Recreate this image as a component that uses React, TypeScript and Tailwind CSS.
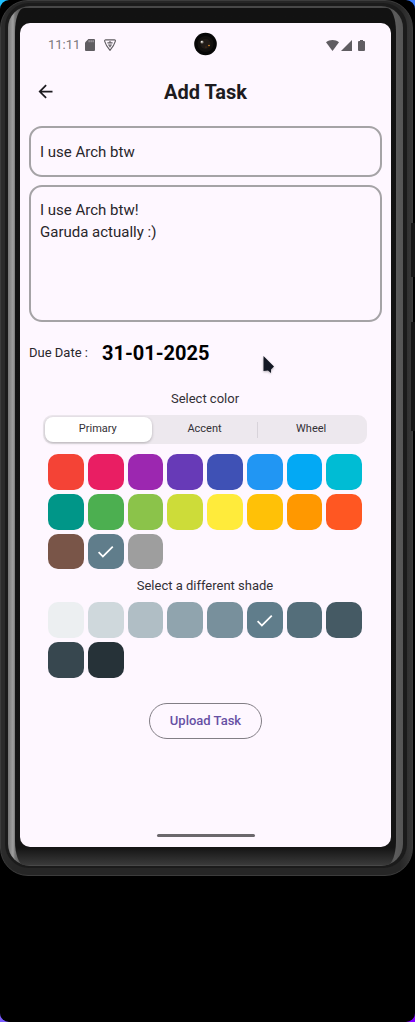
import { useState } from 'react';

type Swatch = { name: string; cls: string };

const primaryColors: Swatch[] = [
  { name: 'Red', cls: 'bg-[#f44336]' },
  { name: 'Pink', cls: 'bg-[#e91e63]' },
  { name: 'Purple', cls: 'bg-[#9c27b0]' },
  { name: 'Deep purple', cls: 'bg-[#673ab7]' },
  { name: 'Indigo', cls: 'bg-[#3f51b5]' },
  { name: 'Blue', cls: 'bg-[#2196f3]' },
  { name: 'Light blue', cls: 'bg-[#03a9f4]' },
  { name: 'Cyan', cls: 'bg-[#00bcd4]' },
  { name: 'Teal', cls: 'bg-[#009688]' },
  { name: 'Green', cls: 'bg-[#4caf50]' },
  { name: 'Light green', cls: 'bg-[#8bc34a]' },
  { name: 'Lime', cls: 'bg-[#cddc39]' },
  { name: 'Yellow', cls: 'bg-[#ffeb3b]' },
  { name: 'Amber', cls: 'bg-[#ffc107]' },
  { name: 'Orange', cls: 'bg-[#ff9800]' },
  { name: 'Deep orange', cls: 'bg-[#ff5722]' },
  { name: 'Brown', cls: 'bg-[#795548]' },
  { name: 'Blue grey', cls: 'bg-[#607d8b]' },
  { name: 'Grey', cls: 'bg-[#9e9e9e]' },
];

const shades: Swatch[] = [
  { name: 'Blue grey 50', cls: 'bg-[#eceff1]' },
  { name: 'Blue grey 100', cls: 'bg-[#cfd8dc]' },
  { name: 'Blue grey 200', cls: 'bg-[#b0bec5]' },
  { name: 'Blue grey 300', cls: 'bg-[#90a4ae]' },
  { name: 'Blue grey 400', cls: 'bg-[#78909c]' },
  { name: 'Blue grey 500', cls: 'bg-[#607d8b]' },
  { name: 'Blue grey 600', cls: 'bg-[#546e7a]' },
  { name: 'Blue grey 700', cls: 'bg-[#455a64]' },
  { name: 'Blue grey 800', cls: 'bg-[#37474f]' },
  { name: 'Blue grey 900', cls: 'bg-[#263238]' },
];

function SwatchGrid({ items, initial }: { items: Swatch[]; initial: string }) {
  const [selected, setSelected] = useState(initial);
  return (
    <div className="grid grid-cols-8 gap-1">
      {items.map((s) => (
        <button
          key={s.name}
          type="button"
          aria-label={s.name}
          aria-pressed={selected === s.name}
          onClick={() => setSelected(s.name)}
          className={`flex aspect-square items-center justify-center rounded-[10px] ${s.cls}`}
        >
          {selected === s.name && (
            <svg viewBox="0 0 24 24" className="size-[21px]" fill="#fff" aria-hidden="true">
              <path d="M9 16.17 4.83 12l-1.42 1.41L9 19 21 7l-1.41-1.41z" />
            </svg>
          )}
        </button>
      ))}
    </div>
  );
}

function StatusBar() {
  return (
    <div className="flex h-11 items-center justify-between pr-[26px] pl-7 text-[#7b777c]">
      <div className="flex items-center">
        <span className="text-[13px] leading-4">11:11</span>
        <svg viewBox="0 0 10 12" className="ml-[5px] h-3 w-[10px]" fill="#605d62" aria-hidden="true">
          <path d="M3.4 0H9a1 1 0 0 1 1 1v10a1 1 0 0 1-1 1H1a1 1 0 0 1-1-1V3.5z" />
          <path d="M3.6 1.2h1v2h-1zM5.6 1.2h1v2h-1zM7.6 1.2h1v2h-1z" fill="#b5afb7" />
        </svg>
        <svg viewBox="0 0 12 12" className="ml-[9px] size-3" fill="none" stroke="#605d62" aria-hidden="true">
          <path d="M1.500.9h9q1.200 0 .8 1.500C10.600 5 8 9 6 11.300 4 9 1.400 5 .7 2.400.3.900 1.500.900 1.500.900z" strokeWidth="1.100" strokeLinejoin="round" />
          <path d="M3.400 3.900h5.200M4.100 6h3.800" strokeWidth="1.200" />
          <path d="M6 2.300v1.400M6 6v2.200" strokeWidth="1.500" />
        </svg>
      </div>
      <div className="flex items-center text-[#605d62]">
        <svg viewBox="0 0 13 11" className="h-[11px] w-[13px]" fill="currentColor" aria-hidden="true">
          <path d="M0 2.300C3.600-.7 9.400-.7 13 2.300L6.500 11z" />
        </svg>
        <svg viewBox="0 0 11 11" className="ml-[2px] size-[11px]" fill="currentColor" aria-hidden="true">
          <path d="M11 0v11H0z" />
        </svg>
        <svg viewBox="0 0 7 11" className="ml-[6px] h-[11px] w-[7px]" fill="currentColor" aria-hidden="true">
          <path d="M2 0h3v1h1a1 1 0 0 1 1 1v8a1 1 0 0 1-1 1H1a1 1 0 0 1-1-1V2a1 1 0 0 1 1-1h1z" />
        </svg>
      </div>
    </div>
  );
}

function Camera() {
  return (
    <svg viewBox="0 0 24 24" className="absolute top-[9px] left-1/2 size-6 -translate-x-1/2" aria-hidden="true">
      <circle cx="11.500" cy="12" r="11.300" fill="#070707" />
      <circle cx="11.500" cy="12" r="8" fill="#13110f" />
      <circle cx="11.500" cy="12" r="5" fill="#211b17" />
      <circle cx="8" cy="10" r="1.600" fill="#8a857c" />
      <circle cx="7.800" cy="9.800" r=".8" fill="#fff" />
      <circle cx="15" cy="13.500" r=".8" fill="#e8932a" />
      <circle cx="12" cy="15" r=".6" fill="#7a4015" />
    </svg>
  );
}

function Cursor() {
  return (
    <svg
      viewBox="0 0 12 19"
      className="absolute top-[333px] left-[243px] h-[19px] w-3 drop-shadow-[0_1px_1px_rgba(0,0,0,0.3)]"
      aria-hidden="true"
    >
      <path d="M.5 0 11 10.500 8 13.500V17L5 14.500.5 15z" fill="#141824" />
    </svg>
  );
}

const tabs = ['Primary', 'Accent', 'Wheel'];

function TaskForm() {
  const [tab, setTab] = useState('Primary');
  return (
    <form className="flex flex-col px-[9px]" onSubmit={(e) => e.preventDefault()}>
      <input
        aria-label="Title"
        defaultValue="I use Arch btw"
        className="h-[51px] w-full rounded-[13px] border-2 border-[#a5a3a6] bg-transparent px-[9px] text-[15px] text-[#29262b] outline-none"
      />
      <textarea
        aria-label="Description"
        defaultValue={'I use Arch btw!\nGaruda actually :)'}
        className="mt-2 block h-[137px] w-full resize-none rounded-[13px] border-2 border-[#a5a3a6] bg-transparent px-[9px] py-3 text-[15px] leading-[22px] text-[#29262b] outline-none"
      />
      <div className="mt-[15px] flex h-8 items-center gap-[14px]">
        <span className="text-[13px] text-[#29262b]">Due Date :</span>
        <button type="button" className="text-xl font-bold text-black">
          31-01-2025
        </button>
      </div>
      <section className="mt-5 pr-[15px] pl-[14px]">
        <h2 className="text-center text-[13px] leading-5 text-[#333036]">Select color</h2>
        <div role="tablist" className="mt-[6px] grid h-[29px] grid-cols-3 rounded-[9px] bg-[#ede8ee] p-[2px]">
          {tabs.map((t) => (
            <button
              key={t}
              type="button"
              role="tab"
              aria-selected={tab === t}
              onClick={() => setTab(t)}
              className={`flex items-center rounded-lg text-[11px] text-[#333036] ${
                tab === t ? 'bg-white shadow-[0_1px_3px_rgba(0,0,0,0.25)]' : ''
              }`}
            >
              <span
                className={`flex h-4 flex-1 items-center justify-center border-r ${
                  t === 'Accent' ? 'border-[#d8d3da]' : 'border-transparent'
                }`}
              >
                {t}
              </span>
            </button>
          ))}
        </div>
        <div className="mt-[10px] px-[5px]">
          <SwatchGrid items={primaryColors} initial="Blue grey" />
          <h2 className="mt-[7px] mb-[6px] text-center text-[13px] leading-5 text-[#333036]">
            Select a different shade
          </h2>
          <SwatchGrid items={shades} initial="Blue grey 500" />
        </div>
      </section>
      <button
        type="submit"
        className="mt-[25px] h-9 self-center rounded-full border border-[#827e85] px-5 text-[13px] font-medium text-[#6750a4]"
      >
        Upload Task
      </button>
    </form>
  );
}

export default function App() {
  return (
    <div className="min-h-screen bg-[conic-gradient(from_0deg,#22a0ff,#3f7fff_6%,#8000ff_44%,#7a5cff_56%,#1fc0ff_94%,#22a0ff)] font-[Roboto,sans-serif]">
      <div className="min-h-screen rounded-[9px] bg-black pr-[2px]">
        <div className="relative rounded-[28px] border border-[#3c3c3c] bg-[linear-gradient(to_right,#2c2c2c,#262626_3%,#262626_97%,#383838)] pt-[2px] pr-[5px] pb-[7px] pl-1">
          <span className="absolute top-[222px] -right-[3px] h-[54px] w-1 bg-[#151515]" />
          <span className="absolute top-[321px] -right-[3px] h-[109px] w-1 bg-[#151515]" />
          <div className="rounded-[24px] bg-[#1b1b1b] pt-[3px] pr-[4px] pb-[2px] pl-[3px]">
            <div className="rounded-[22px] bg-[linear-gradient(to_right,#777,#a0a0a0_5px,#777_7px,#484848_14px,#484848_96%,#5c5c5c_98%,#555)] px-[7px] pt-[2px] pb-[1px]">
              <div className="rounded-[9px/24px] bg-[linear-gradient(to_bottom,#121212,#151515_98%,#3a3a3a)] px-[5px] pt-[15px] pb-[18px]">
                <main className="relative flex h-[824px] flex-col rounded-[10px] bg-[#fef7ff]">
                  <StatusBar />
                  <Camera />
                  <header className="grid h-[59px] grid-cols-[48px_1fr_48px] items-center pb-[10px]">
                    <button type="button" aria-label="Back" className="flex justify-center pl-[2px]">
                      <svg viewBox="0 0 24 24" className="size-[21px]" fill="#1d1b20" aria-hidden="true">
                        <path d="M20 11H7.830l5.590-5.590L12 4l-8 8 8 8 1.410-1.410L7.830 13H20z" />
                      </svg>
                    </button>
                    <h1 className="text-center text-xl font-bold text-[#1d1b20]">Add Task</h1>
                  </header>
                  <TaskForm />
                  <span className="mx-auto mt-auto mb-[10px] h-[3px] w-[98px] rounded-full bg-[#6b676c]" />
                  <Cursor />
                </main>
              </div>
            </div>
          </div>
        </div>
      </div>
    </div>
  );
}
